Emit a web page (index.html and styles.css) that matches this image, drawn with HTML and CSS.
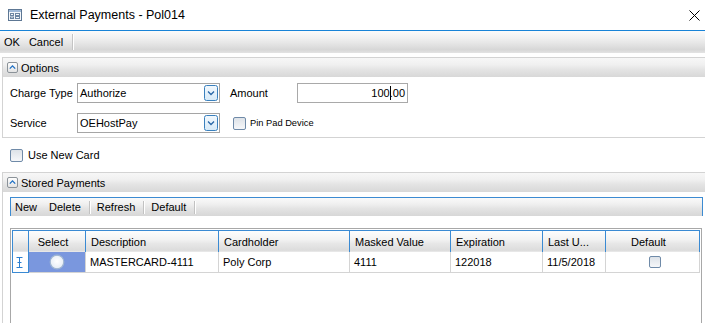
FILE: index.html
```html
<!DOCTYPE html>
<html>
<head>
<meta charset="utf-8">
<link rel="stylesheet" href="styles.css">
</head>
<body>
<div class="titlebar">
  <svg class="app-icon" width="14" height="12" viewBox="0 0 14 12">
    <rect x="0.5" y="0.5" width="13" height="11" fill="#f4f7fb" stroke="#5d7794"/>
    <rect x="1" y="1" width="12" height="2" fill="#9fb9d8"/>
    <rect x="2.5" y="4.5" width="3" height="2" fill="none" stroke="#6d86a3"/>
    <rect x="2.5" y="8" width="3" height="1.5" fill="none" stroke="#6d86a3"/>
    <rect x="7.5" y="4.5" width="4" height="2" fill="none" stroke="#6d86a3"/>
    <rect x="7.5" y="7.5" width="4" height="2" fill="none" stroke="#6d86a3"/>
  </svg>
  <span class="title">External Payments - Pol014</span>
  <svg class="close" width="11" height="11" viewBox="0 0 11 11">
    <path d="M0.5 0.5 L10.5 10.5 M10.5 0.5 L0.5 10.5" stroke="#000" stroke-width="1"/>
  </svg>
</div>

<div class="maintb">
  <span class="tbbtn">OK</span>
  <span class="tbbtn">Cancel</span>
  <span class="sep"></span>
</div>

<section class="panel options">
  <div class="panel-head">
    <svg class="expander" width="11" height="11" viewBox="0 0 11 11">
      <defs><linearGradient id="eg" x1="0" y1="0" x2="0" y2="1"><stop offset="0" stop-color="#ffffff"/><stop offset="1" stop-color="#e2e2e2"/></linearGradient></defs>
      <rect x="0.5" y="0.5" width="10" height="10" rx="1.5" fill="url(#eg)" stroke="#8b9298"/>
      <path d="M2.8 6.6 L5.5 3.9 L8.2 6.6" fill="none" stroke="#1d6fc4" stroke-width="1.3"/>
    </svg>
    <span>Options</span>
  </div>
  <div class="options-body">
    <div class="frow">
      <span class="flabel">Charge Type</span>
      <div class="combo">
        <span class="combo-text">Authorize</span>
        <svg class="ddbtn" width="14" height="16" viewBox="0 0 14 16">
          <defs><linearGradient id="dg" x1="0" y1="0" x2="0" y2="1"><stop offset="0" stop-color="#f3f9fe"/><stop offset="1" stop-color="#d5e9f8"/></linearGradient></defs>
          <rect x="0.5" y="0.5" width="13" height="15" rx="2" fill="url(#dg)" stroke="#3a80bd"/>
          <path d="M4 6.5 L7 9.5 L10 6.5" fill="none" stroke="#2866a6" stroke-width="1.3"/>
        </svg>
      </div>
      <span class="flabel amount-label">Amount</span>
      <div class="textbox"><span>100</span><span class="caret"></span><span>.00</span></div>
    </div>
    <div class="frow">
      <span class="flabel">Service</span>
      <div class="combo">
        <span class="combo-text">OEHostPay</span>
        <svg class="ddbtn" width="14" height="16" viewBox="0 0 14 16">
          <rect x="0.5" y="0.5" width="13" height="15" rx="2" fill="url(#dg)" stroke="#3a80bd"/>
          <path d="M4 6.5 L7 9.5 L10 6.5" fill="none" stroke="#2866a6" stroke-width="1.3"/>
        </svg>
      </div>
      <span class="chk pinpad-chk"></span>
      <span class="small">Pin Pad Device</span>
    </div>
  </div>
</section>

<div class="usenew">
  <span class="chk"></span>
  <span class="usenew-text">Use New Card</span>
</div>

<section class="panel stored">
  <div class="panel-head">
    <svg class="expander" width="11" height="11" viewBox="0 0 11 11">
      <rect x="0.5" y="0.5" width="10" height="10" rx="1.5" fill="url(#eg)" stroke="#8b9298"/>
      <path d="M2.8 6.6 L5.5 3.9 L8.2 6.6" fill="none" stroke="#1d6fc4" stroke-width="1.3"/>
    </svg>
    <span>Stored Payments</span>
  </div>
  <div class="subtb">
    <span class="sbtn first">New</span>
    <span class="sbtn">Delete</span>
    <span class="sep2"></span>
    <span class="sbtn">Refresh</span>
    <span class="sep2"></span>
    <span class="sbtn">Default</span>
    <span class="sep2"></span>
  </div>
  <div class="gridbox">
    <div class="grid">
      <div class="hc rh"></div>
      <div class="hc center">Select</div>
      <div class="hc">Description</div>
      <div class="hc">Cardholder</div>
      <div class="hc">Masked Value</div>
      <div class="hc">Expiration</div>
      <div class="hc">Last U...</div>
      <div class="hc center">Default</div>

      <div class="dc rhd">
        <svg width="7" height="11" viewBox="0 0 7 11"><path d="M0.5 0.5 H6.5 M3.5 0.5 V10.5 M0.5 10.5 H6.5 M1.5 5.5 H5.5" stroke="#2b7fd0" stroke-width="1" fill="none"/></svg>
      </div>
      <div class="dc sel">
        <svg width="16" height="16" viewBox="0 0 16 16">
          <defs><radialGradient id="rg" cx="0.5" cy="0.45" r="0.55"><stop offset="0" stop-color="#ffffff"/><stop offset="1" stop-color="#e4ecf5"/></radialGradient></defs>
          <circle cx="8" cy="8" r="6.8" fill="url(#rg)" stroke="#9fb6d2" stroke-width="1.2"/>
        </svg>
      </div>
      <div class="dc">MASTERCARD-4111</div>
      <div class="dc">Poly Corp</div>
      <div class="dc">4111</div>
      <div class="dc">122018</div>
      <div class="dc">11/5/2018</div>
      <div class="dc center"><span class="chk small-chk"></span></div>
    </div>
  </div>
</section>
</body>
</html>
```

FILE: styles.css
```css
* { box-sizing: border-box; }

body {
  margin: 0;
  width: 705px;
  height: 323px;
  overflow: hidden;
  background: #ffffff;
  font-family: "Liberation Sans", Arial, sans-serif;
  font-size: 11px;
  color: #000;
}

.titlebar {
  height: 31px;
  border-bottom: 1px solid #1883d7;
  display: flex;
  align-items: center;
  padding-left: 8px;
}

.app-icon { flex: none; }

.title {
  margin-left: 8px;
  font-size: 12.5px;
  color: #000;
}

.close {
  margin-left: auto;
  margin-right: 5px;
}

.maintb {
  height: 22px;
  display: flex;
  align-items: center;
  padding-left: 1px;
  background: linear-gradient(#fbfbfb 0%, #f1f1f1 30%, #e6e6e6 55%, #d7d7d7 85%, #e3e3e3 100%);
}

.tbbtn { padding: 0 3px; }
.tbbtn + .tbbtn { margin-left: 3px; }

.sep {
  width: 2px;
  height: 16px;
  border-left: 1px solid #c4c4c4;
  border-right: 1px solid #ffffff;
  margin-left: 6px;
}

.panel {
  width: 708px;
  margin-left: 2px;
  border: 1px solid #d3d3d3;
}

.options { margin-top: 4px; }

.panel-head {
  height: 19px;
  display: flex;
  align-items: center;
  padding-left: 4px;
  background: linear-gradient(#f7f7f7 0%, #f0f0f0 35%, #e4e4e4 60%, #d8d8d8 100%);
}

.expander { margin-right: 3px; flex: none; }

.options-body {
  padding: 6px 0 4px 7px;
  display: flex;
  flex-direction: column;
  gap: 10px;
}

.frow {
  display: flex;
  align-items: center;
  height: 20px;
}

.flabel { width: 67px; flex: none; }

.amount-label { margin-left: 10px; }

.combo {
  width: 143px;
  height: 20px;
  border: 1px solid #a5a5a5;
  display: flex;
  align-items: center;
  padding-left: 2px;
}

.combo-text { flex: 1; }

.ddbtn { margin-right: 1px; flex: none; }

.textbox {
  width: 111px;
  height: 20px;
  border: 1px solid #a9a9a9;
  display: flex;
  align-items: center;
  justify-content: flex-end;
  padding-right: 2px;
}

.caret {
  display: inline-block;
  width: 1px;
  height: 14px;
  background: #000;
  margin-right: -1px;
}

.chk {
  display: inline-block;
  width: 13px;
  height: 13px;
  border: 1px solid #6f8aa8;
  border-radius: 2px;
  background: linear-gradient(#dde2e8, #f6f7f9);
  flex: none;
}

.pinpad-chk { margin-left: 13px; }

.small {
  font-size: 9.3px;
  margin-left: 4px;
}

.usenew {
  height: 34px;
  display: flex;
  align-items: center;
  padding-left: 10px;
}

.usenew-text { margin-left: 5px; }

.stored { height: 152px; }

.subtb {
  margin: 5px 6px 0 7px;
  height: 19px;
  border: 1px solid #3c8bd2;
  border-bottom: none;
  display: flex;
  align-items: center;
  background: linear-gradient(#fafafa 0%, #efefef 35%, #e3e3e3 60%, #d7d7d7 100%);
}

.sbtn.first { margin-left: 4px; }
.sbtn + .sbtn { margin-left: 12px; }

.sep2 {
  width: 2px;
  height: 13px;
  border-left: 1px solid #c2c2c2;
  border-right: 1px solid #ffffff;
  margin: 0 6px 0 8px;
}

.gridbox {
  margin: 12px 7px 0 7px;
  height: 96px;
  border: 1px solid #a8a8a8;
  border-bottom: none;
  padding: 1px;
}

.grid {
  display: grid;
  grid-template-columns: 17px 57px 133px 131px 101px 92px 63px 94px;
  grid-template-rows: 22px 21px;
}

.hc {
  border-top: 1px solid #3a8ad3;
  border-right: 1px solid #3a8ad3;
  background: linear-gradient(#fdfdfd 0%, #f3f3f3 40%, #e7e7e7 60%, #dcdcdc 92%, #ececec 100%);
  display: flex;
  align-items: center;
  padding-left: 5px;
}

.hc.rh {
  border-left: 1px solid #3a8ad3;
  padding: 0;
}

.center { justify-content: center; padding-left: 0; }

.hc.center { padding-right: 8px; }

.dc {
  border-right: 1px solid #d4d4d4;
  border-bottom: 1px solid #d4d4d4;
  display: flex;
  align-items: center;
  padding-left: 4px;
}

.dc.rhd {
  border: 1px solid #3a8ad3;
  border-top: none;
  padding-left: 3px;
}

.dc.sel {
  background: #7a97de;
  justify-content: center;
  padding-left: 0;
}

.small-chk { width: 12px; height: 12px; }
```
